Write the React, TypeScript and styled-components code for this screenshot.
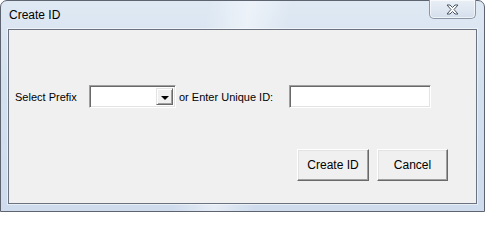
import * as React from 'react';
import styled, { createGlobalStyle } from 'styled-components';

const GlobalStyle = createGlobalStyle`
  html, body {
    margin: 0;
    padding: 0;
    background: #ffffff;
  }
`;

const Window = styled.div`
  box-sizing: border-box;
  width: 485px;
  height: 212px;
  border: 1px solid #5d6470;
  border-radius: 7px 7px 0 0;
  background:
    linear-gradient(100deg, rgba(255,255,255,0) 40%, rgba(255,255,255,0.45) 48%, rgba(255,255,255,0) 56%),
    linear-gradient(180deg, #dfe9f4 0%, #d3e0ee 40%, #cfdced 100%);
  display: flex;
  flex-direction: column;
  padding: 0 7px 7px 7px;
  font-family: "Liberation Sans", Arial, sans-serif;
`;

const TitleBar = styled.div`
  height: 28px;
  display: flex;
  align-items: flex-start;
  justify-content: space-between;
`;

const Title = styled.div`
  font-size: 12px;
  color: #000;
  padding-top: 7px;
  padding-left: 1px;
`;

const CloseButton = styled.button`
  box-sizing: border-box;
  width: 47px;
  height: 19px;
  margin-top: -1px;
  margin-right: 1px;
  border: 1px solid #8c97a5;
  border-top: none;
  border-radius: 0 0 5px 5px;
  background: linear-gradient(180deg, #e9eff6 0%, #dfe7f1 50%, #d4dfec 100%);
  box-shadow: inset 0 0 0 1px rgba(255,255,255,0.6);
  display: flex;
  align-items: center;
  justify-content: center;
  padding: 0;
`;

const Client = styled.div`
  flex: 1;
  background: #f0f0f0;
  border: 1px solid #6b7380;
  box-shadow: 0 0 0 1px rgba(255,255,255,0.5);
  display: flex;
  flex-direction: column;
  padding: 55px 28px 0 6px;
  font-size: 11px;
  color: #000;
`;

const Row = styled.div`
  display: flex;
  align-items: center;
`;

const Label = styled.span<{ $width: number; $indent?: number }>`
  box-sizing: border-box;
  width: ${p => p.$width}px;
  padding-left: ${p => p.$indent ?? 0}px;
  flex: none;
`;

const Sunken = styled.div<{ $width: number }>`
  box-sizing: border-box;
  width: ${p => p.$width}px;
  height: 23px;
  background: #fff;
  border-top: 1px solid #a0a0a0;
  border-left: 1px solid #a0a0a0;
  border-right: 1px solid #fff;
  border-bottom: 1px solid #fff;
  box-shadow: inset 1px 1px 0 #696969, inset -1px -1px 0 #e3e3e3;
  display: flex;
  justify-content: flex-end;
  padding: 2px;
  flex: none;
`;

const DropButton = styled.div`
  box-sizing: border-box;
  width: 17px;
  height: 100%;
  background: #f0f0f0;
  border-top: 1px solid #e3e3e3;
  border-left: 1px solid #e3e3e3;
  border-right: 1px solid #696969;
  border-bottom: 1px solid #696969;
  box-shadow: inset 1px 1px 0 #fff, inset -1px -1px 0 #a0a0a0;
  display: flex;
  align-items: center;
  justify-content: center;
  padding-top: 2px;
`;

const Arrow = styled.div`
  width: 0;
  height: 0;
  border-left: 4px solid transparent;
  border-right: 4px solid transparent;
  border-top: 4px solid #000;
`;

const ButtonRow = styled.div`
  display: flex;
  justify-content: flex-end;
  gap: 8px;
  margin-top: 41px;
`;

const Button = styled.button<{ $width: number }>`
  box-sizing: border-box;
  width: ${p => p.$width}px;
  height: 32px;
  background: #f0f0f0;
  border-top: 1px solid #fff;
  border-left: 1px solid #fff;
  border-right: 1px solid #696969;
  border-bottom: 1px solid #696969;
  box-shadow: inset -1px -1px 0 #a0a0a0, inset 1px 1px 0 #e3e3e3;
  font-family: "Liberation Sans", Arial, sans-serif;
  font-size: 12px;
  color: #000;
  padding: 0;
`;

export default function App() {
  return (
    <>
      <GlobalStyle />
      <Window>
        <TitleBar>
          <Title>Create ID</Title>
          <CloseButton aria-label="Close">
            <svg width="13" height="11" viewBox="0 0 13 11">
              <path
                d="M1 1 H4 L6.5 3.5 L9 1 H12 L8 5.5 L12 10 H9 L6.5 7.5 L4 10 H1 L5 5.5 Z"
                fill="#ffffff"
                stroke="#4a5564"
                strokeWidth="1"
                strokeLinejoin="round"
              />
            </svg>
          </CloseButton>
        </TitleBar>
        <Client>
          <Row>
            <Label $width={74}>Select Prefix</Label>
            <Sunken $width={87}>
              <DropButton>
                <Arrow />
              </DropButton>
            </Sunken>
            <Label $width={113} $indent={3}>
              or Enter Unique ID:
            </Label>
            <Sunken $width={142} />
          </Row>
          <ButtonRow>
            <Button $width={72}>Create ID</Button>
            <Button $width={71}>Cancel</Button>
          </ButtonRow>
        </Client>
      </Window>
    </>
  );
}
